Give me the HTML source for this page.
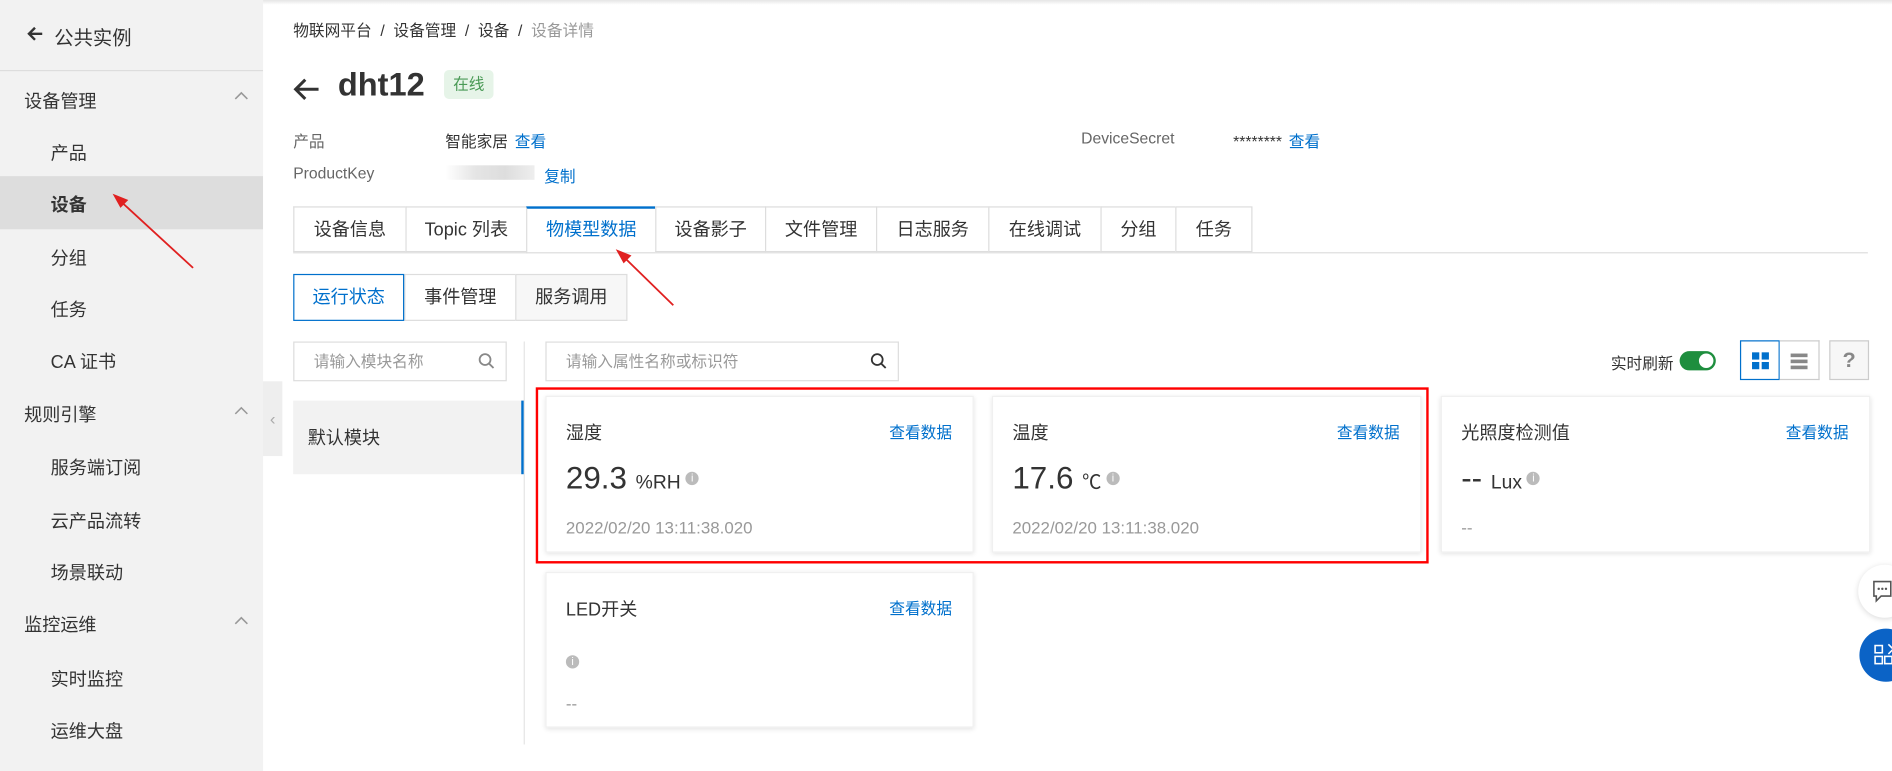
<!DOCTYPE html>
<html><head><meta charset="utf-8"><style>
html,body{margin:0;padding:0;width:1892px;height:771px;overflow:hidden;background:#fff}
#w{position:absolute;left:0;top:0;width:1568px;height:639px;transform:scale(1.20663);transform-origin:0 0;font-family:"Liberation Sans","Noto Sans CJK SC",sans-serif;color:#333}
.a{position:absolute;white-space:nowrap}
.sb{position:absolute;left:0;top:0;width:218px;height:639px;background:#f2f2f2}
.it{position:absolute;font-size:15px;color:#333}
.ch{position:absolute;left:194px}
.tab{position:absolute;top:171px;height:38px;border:1px solid #ddd;border-right:none;background:#fff;font-size:15px;line-height:38px;text-align:center;box-sizing:border-box}
.card{position:absolute;background:#fff;box-shadow:0 1px 4px rgba(0,0,0,.12);border:1px solid #f0f0f0}
.ct{position:absolute;left:16px;top:19px;font-size:15px}
.cl{position:absolute;right:17px;top:19px;font-size:13px;color:#0070cc}
.cv{position:absolute;left:16px;top:52px;font-size:26px;color:#333}
.cv small{font-size:16px}
.i{display:inline-block;width:11px;height:11px;border-radius:50%;background:#bbb;color:#fff;font-size:9px;line-height:11px;text-align:center;vertical-align:6px;margin-left:4px}
.cd{position:absolute;left:16px;top:100px;font-size:14px;color:#999}
.btn{position:absolute;top:282px;width:33px;height:33px;box-sizing:border-box;border:1px solid #ccc;background:#fff}
.srch{position:absolute;right:9px;top:8px}
</style></head><body><div id="w">
<div style="position:absolute;left:218px;top:0;width:1350px;height:4px;background:linear-gradient(#e5e5e5,#fff)"></div>
<div class="sb">
<svg class="a" style="left:22px;top:21px" width="14" height="14"><path d="M13 7H2M7 2L2 7l5 5" fill="none" stroke="#333" stroke-width="2"/></svg>
<div class="it" style="left:45px;top:18px;font-size:16px">公共实例</div>
<div style="position:absolute;left:0;top:58px;width:218px;height:1px;background:#ddd"></div>
<div class="it" style="left:20px;top:73px">设备管理</div><svg class="ch" style="top:75px" width="12" height="8"><path d="M1 7l5-5 5 5" fill="none" stroke="#999" stroke-width="1.3"/></svg>
<div class="it" style="left:42px;top:116px">产品</div>
<div style="position:absolute;left:0;top:146px;width:218px;height:44px;background:#ddd"></div>
<div class="it" style="left:42px;top:159px;font-weight:bold">设备</div>
<div class="it" style="left:42px;top:203px">分组</div>
<div class="it" style="left:42px;top:246px">任务</div>
<div class="it" style="left:42px;top:289px">CA 证书</div>
<div class="it" style="left:20px;top:333px">规则引擎</div><svg class="ch" style="top:336px" width="12" height="8"><path d="M1 7l5-5 5 5" fill="none" stroke="#999" stroke-width="1.3"/></svg>
<div class="it" style="left:42px;top:377px">服务端订阅</div>
<div class="it" style="left:42px;top:421px">云产品流转</div>
<div class="it" style="left:42px;top:464px">场景联动</div>
<div class="it" style="left:20px;top:507px">监控运维</div><svg class="ch" style="top:510px" width="12" height="8"><path d="M1 7l5-5 5 5" fill="none" stroke="#999" stroke-width="1.3"/></svg>
<div class="it" style="left:42px;top:552px">实时监控</div>
<div class="it" style="left:42px;top:595px">运维大盘</div>
</div>
<div style="position:absolute;left:218px;top:316px;width:16px;height:62px;background:#eee;color:#aaa;font-size:14px;line-height:62px;text-align:center">‹</div>
<div class="a" style="left:243px;top:15px;font-size:13px;color:#333">物联网平台 &nbsp;/&nbsp; 设备管理 &nbsp;/&nbsp; 设备 &nbsp;/&nbsp; <span style="color:#999">设备详情</span></div>
<svg class="a" style="left:243px;top:64px" width="22" height="20"><path d="M21 10H3M10 2L2 10l8 8" fill="none" stroke="#333" stroke-width="2.5"/></svg>
<div class="a" style="left:280px;top:55px;font-size:27px;font-weight:bold">dht12</div>
<div class="a" style="left:368px;top:58px;width:41px;height:24px;border-radius:4px;background:#e6f4e8;color:#4a9a56;font-size:13px;line-height:24px;text-align:center">在线</div>
<div class="a" style="left:243px;top:107px;font-size:13px;color:#666">产品</div>
<div class="a" style="left:369px;top:107px;font-size:13px">智能家居 <span style="color:#0070cc;margin-left:2px">查看</span></div>
<div class="a" style="left:896px;top:107px;font-size:13px;color:#666">DeviceSecret</div>
<div class="a" style="left:1022px;top:107px;font-size:13px">******** <span style="color:#0070cc;margin-left:2px">查看</span></div>
<div class="a" style="left:243px;top:136px;font-size:13px;color:#666">ProductKey</div>
<div class="a" style="left:369px;top:137px;width:74px;height:12px;background:linear-gradient(90deg,#fff,#e5e5e5,#ddd,#eee)"></div>
<div class="a" style="left:451px;top:136px;font-size:13px;color:#0070cc">复制</div>
<div style="position:absolute;left:243px;top:209px;width:1305px;height:1px;background:#ddd"></div>
<div class="tab" style="left:243px;width:93px">设备信息</div>
<div class="tab" style="left:336px;width:100px">Topic 列表</div>
<div class="tab" style="left:436px;width:107px;border-top:2px solid #0070cc;color:#0070cc;height:39px;line-height:36px">物模型数据</div>
<div class="tab" style="left:543px;width:91px">设备影子</div>
<div class="tab" style="left:634px;width:92px">文件管理</div>
<div class="tab" style="left:726px;width:93px">日志服务</div>
<div class="tab" style="left:819px;width:93px">在线调试</div>
<div class="tab" style="left:912px;width:62px">分组</div>
<div class="tab" style="left:974px;width:64px;border-right:1px solid #ddd">任务</div>
<div class="tab" style="top:227px;left:335px;width:92px;height:39px">事件管理</div>
<div class="tab" style="top:227px;left:427px;width:93px;height:39px;background:#f7f7f7;border-right:1px solid #ddd">服务调用</div>
<div class="tab" style="top:227px;left:243px;width:92px;height:39px;border:1px solid #0070cc;color:#0070cc">运行状态</div>
<div class="a" style="left:243px;top:283px;width:177px;height:33px;border:1px solid #ddd;box-sizing:border-box;font-size:13px;color:#999;line-height:31px;padding-left:16px">请输入模块名称<svg class="srch" width="14" height="14"><circle cx="6" cy="6" r="4.5" fill="none" stroke="#888" stroke-width="1.5"/><path d="M9.5 9.5L13 13" stroke="#888" stroke-width="1.5"/></svg></div>
<div class="a" style="left:452px;top:283px;width:293px;height:33px;border:1px solid #ddd;box-sizing:border-box;font-size:13px;color:#999;line-height:31px;padding-left:16px">请输入属性名称或标识符<svg class="srch" width="14" height="14"><circle cx="6" cy="6" r="4.5" fill="none" stroke="#333" stroke-width="1.5"/><path d="M9.5 9.5L13 13" stroke="#333" stroke-width="1.5"/></svg></div>
<div style="position:absolute;left:434px;top:283px;width:1px;height:334px;background:#e5e5e5"></div>
<div style="position:absolute;left:243px;top:332px;width:189px;height:61px;background:#f2f2f2;border-right:2px solid #0070cc"></div>
<div class="a" style="left:255px;top:352px;font-size:15px">默认模块</div>
<div class="a" style="left:1335px;top:291px;font-size:13px">实时刷新</div>
<div class="a" style="left:1392px;top:291px;width:30px;height:16px;border-radius:8px;background:#1e8e3e"><div style="position:absolute;right:2px;top:2px;width:12px;height:12px;border-radius:50%;background:#fff"></div></div>
<div class="btn" style="left:1442px;border-color:#0070cc"><svg width="31" height="31"><g fill="#0070cc"><rect x="9" y="9" width="6" height="6"/><rect x="17" y="9" width="6" height="6"/><rect x="9" y="17" width="6" height="6"/><rect x="17" y="17" width="6" height="6"/></g></svg></div>
<div class="btn" style="left:1475px;border-left:none"><svg width="31" height="31"><g fill="#888"><rect x="9" y="10" width="14" height="3"/><rect x="9" y="15" width="14" height="3"/><rect x="9" y="20" width="14" height="3"/></g></svg></div>
<div class="btn" style="left:1516px;background:#f7f7f7;text-align:center;line-height:31px;font-size:18px;color:#888;font-weight:bold">?</div>
<div class="card" style="left:452px;top:328px;width:353px;height:128px"><div class="ct">湿度</div><div class="cl">查看数据</div><div class="cv">29.3 <small>%RH</small><span class="i">i</span></div><div class="cd">2022/02/20 13:11:38.020</div></div>
<div class="card" style="left:822px;top:328px;width:354px;height:128px"><div class="ct">温度</div><div class="cl">查看数据</div><div class="cv">17.6 <small>℃</small><span class="i">i</span></div><div class="cd">2022/02/20 13:11:38.020</div></div>
<div class="card" style="left:1194px;top:328px;width:354px;height:128px"><div class="ct">光照度检测值</div><div class="cl">查看数据</div><div class="cv">-- <small>Lux</small><span class="i">i</span></div><div class="cd">--</div></div>
<div class="card" style="left:452px;top:474px;width:353px;height:127px"><div class="ct">LED开关</div><div class="cl">查看数据</div><div class="cv" style="top:58px"><span class="i" style="margin:0">i</span></div><div class="cd">--</div></div>
<div style="position:absolute;left:444px;top:321px;width:740px;height:146px;border:2px solid #f00;box-sizing:border-box"></div>
<div style="position:absolute;left:1540px;top:468px;width:44px;height:44px;border-radius:50%;background:#fff;box-shadow:0 1px 5px rgba(0,0,0,.15)"><svg width="30" height="44"><path d="M13 14h14v12h-8l-4 4v-4h-2z" fill="none" stroke="#555" stroke-width="1.3"/><circle cx="17" cy="20" r="1" fill="#555"/><circle cx="20" cy="20" r="1" fill="#555"/><circle cx="23" cy="20" r="1" fill="#555"/></svg></div>
<div style="position:absolute;left:1541px;top:521px;width:44px;height:44px;border-radius:50%;background:#0b63c6"><svg width="30" height="44"><g fill="none" stroke="#fff" stroke-width="1.3"><rect x="13" y="14" width="6" height="6"/><rect x="13" y="23" width="6" height="6"/><rect x="21" y="23" width="6" height="6"/><path d="M24 13l4 4-4 4"/></g></svg></div>
<svg style="position:absolute;left:0;top:0" width="1568" height="639"><g stroke="#e02020" stroke-width="1.5" fill="#e02020"><line x1="160" y1="222" x2="98" y2="165"/><path d="M95 162l10 4-5 5z"/><line x1="558" y1="253" x2="515" y2="211"/><path d="M512 208l10 4-5 5z"/></g></svg>
</div></body></html>
